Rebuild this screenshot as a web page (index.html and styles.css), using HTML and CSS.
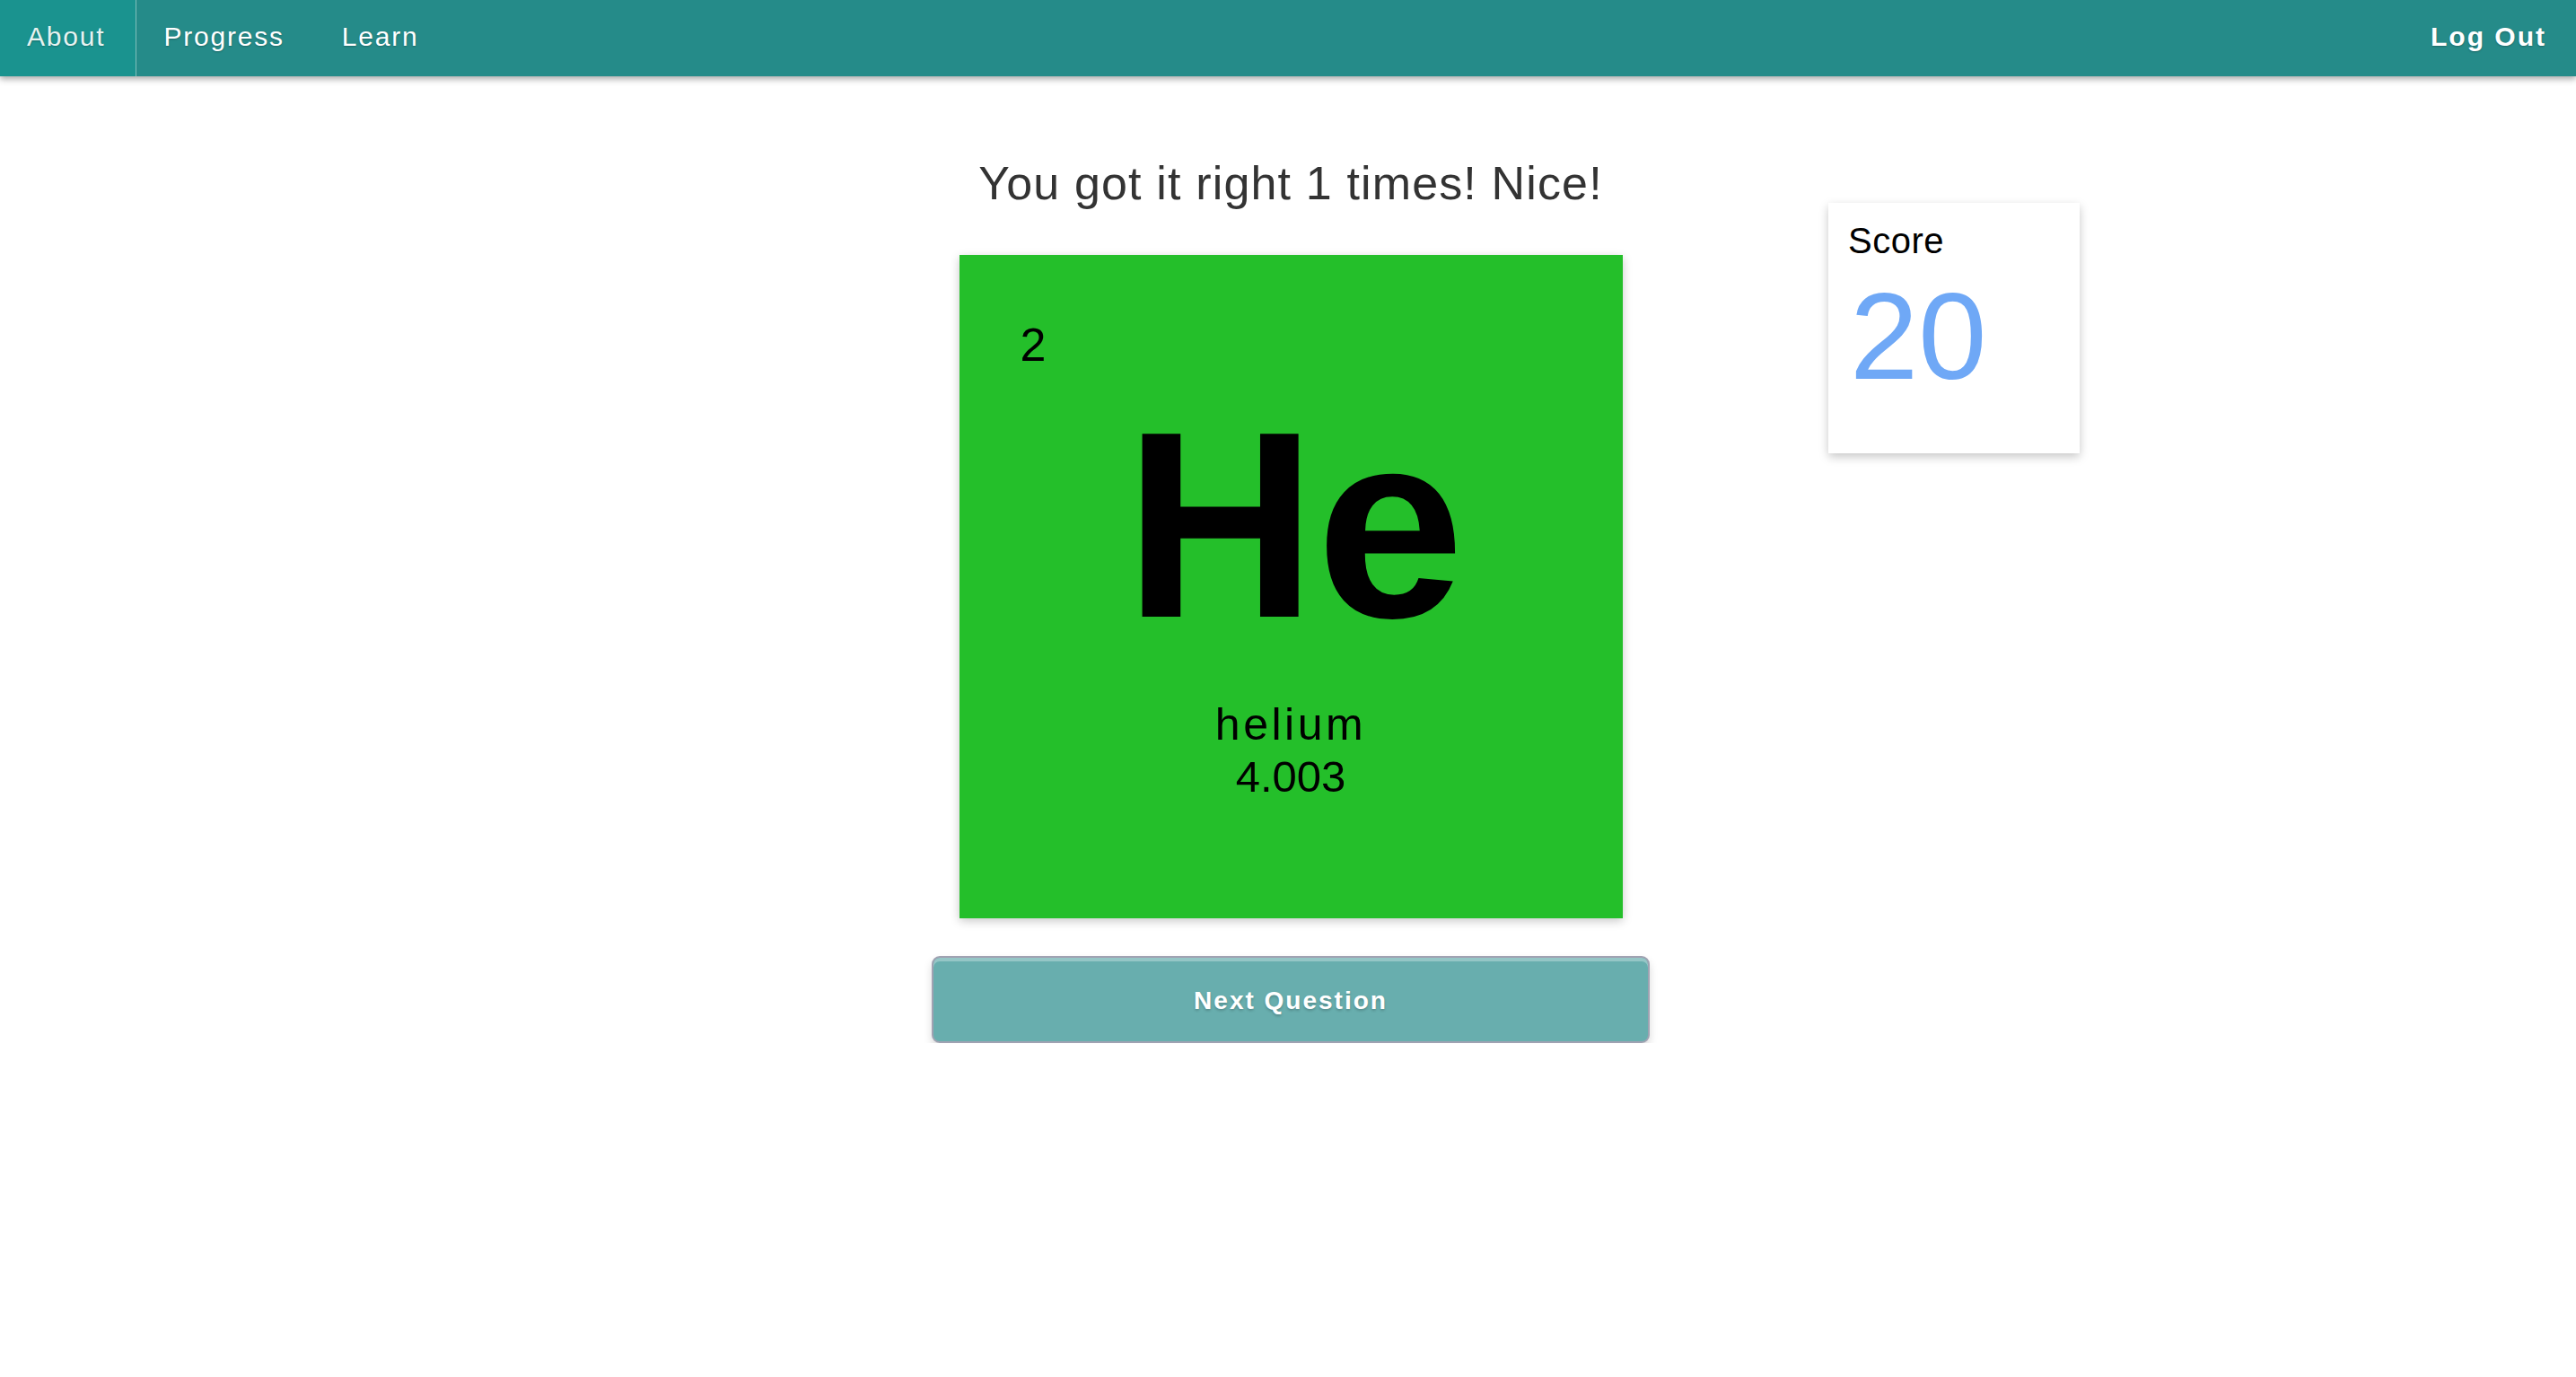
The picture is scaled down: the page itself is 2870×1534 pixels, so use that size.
FILE: index.html
```html
<!DOCTYPE html>
<html lang="en">
<head>
<meta charset="utf-8">
<title>Quiz</title>
<link rel="stylesheet" href="styles.css">
</head>
<body>
<nav class="navbar">
  <div class="nav-left">
    <a class="nav-link active" href="#">About</a>
    <a class="nav-link" href="#">Progress</a>
    <a class="nav-link" href="#">Learn</a>
  </div>
  <a class="nav-link logout" href="#">Log Out</a>
</nav>
<main class="layout">
  <div class="spacer"></div>
  <section class="center">
    <h1 class="result">You got it right 1 times! Nice!</h1>
    <div class="element-card">
      <div class="atomic-number">2</div>
      <div class="symbol">He</div>
      <div class="name">helium</div>
      <div class="mass">4.003</div>
    </div>
    <button class="next-btn">Next Question</button>
  </section>
  <aside class="side">
    <div class="score-card">
      <div class="score-label">Score</div>
      <div class="score-value">20</div>
    </div>
  </aside>
</main>
</body>
</html>
```

FILE: styles.css
```css
* { box-sizing: border-box; }
html, body {
  margin: 0;
  padding: 0;
  background: #ffffff;
  font-family: "Liberation Sans", Arial, Helvetica, sans-serif;
}

.navbar {
  height: 85px;
  background: #258b89;
  display: flex;
  justify-content: space-between;
  align-items: stretch;
  box-shadow: 0 3px 7px rgba(0, 0, 0, 0.35);
  position: relative;
  z-index: 2;
}
.nav-left {
  display: flex;
  align-items: stretch;
}
.nav-link {
  display: flex;
  align-items: center;
  padding: 0 34px 3px 30px;
  color: #ffffff;
  text-decoration: none;
  font-size: 30px;
  letter-spacing: 1.8px;
  text-shadow: 0 1px 2px rgba(0, 0, 0, 0.25);
}
.nav-link.active {
  background: #1a938f;
  color: #e6f3f1;
  border-right: 1px solid #7fbfbb;
}
.nav-link.logout {
  padding: 0 33px 3px 0;
  font-weight: 600;
  letter-spacing: 2px;
}

.layout {
  display: grid;
  grid-template-columns: 1fr 800px 1fr;
  padding-top: 89px;
  padding-left: 6px;
}
.center {
  display: flex;
  flex-direction: column;
  align-items: center;
}
.result {
  margin: 0;
  font-weight: normal;
  font-size: 52px;
  line-height: 60px;
  letter-spacing: 1.15px;
  color: #333333;
}
.element-card {
  margin-top: 50px;
  width: 739px;
  height: 739px;
  background: #24bf2a;
  box-shadow: 0 3px 10px rgba(0, 0, 0, 0.22);
  padding-top: 70px;
  display: flex;
  flex-direction: column;
  color: #000000;
}
.atomic-number {
  font-size: 52px;
  line-height: 60px;
  padding-left: 68px;
}
.symbol {
  margin-top: 23px;
  font-size: 296px;
  line-height: 296px;
  font-weight: bold;
  text-align: center;
  padding-left: 8px;
}
.name {
  margin-top: 45px;
  font-size: 50px;
  line-height: 58px;
  letter-spacing: 3.5px;
  text-align: center;
}
.mass {
  font-size: 49px;
  line-height: 58px;
  letter-spacing: 0;
  text-align: center;
}
.next-btn {
  margin-top: 42px;
  width: 800px;
  height: 97px;
  background: #68aeae;
  border: 2px solid #a0a2b2;
  border-radius: 9px;
  box-shadow: inset 0 4px 0 rgba(255, 255, 255, 0.3), 0 5px 10px rgba(0, 0, 0, 0.15);
  color: #ffffff;
  font-family: "Liberation Sans", Arial, sans-serif;
  font-weight: bold;
  font-size: 28px;
  letter-spacing: 2px;
  text-shadow: 0 2px 3px rgba(0, 0, 0, 0.2);
  padding: 2px 0 0 0;
  cursor: pointer;
}

.side {
  padding-left: 199px;
  padding-top: 52px;
}
.score-card {
  width: 280px;
  height: 279px;
  background: #ffffff;
  box-shadow: 0 4px 10px rgba(0, 0, 0, 0.22);
  padding: 18px 22px 0 22px;
}
.score-label {
  font-size: 40px;
  line-height: 48px;
  color: #000000;
  letter-spacing: 0.5px;
}
.score-value {
  margin-top: 14px;
  font-size: 137px;
  line-height: 137px;
  color: #6fa8f6;
  padding-left: 2px;
}
```
